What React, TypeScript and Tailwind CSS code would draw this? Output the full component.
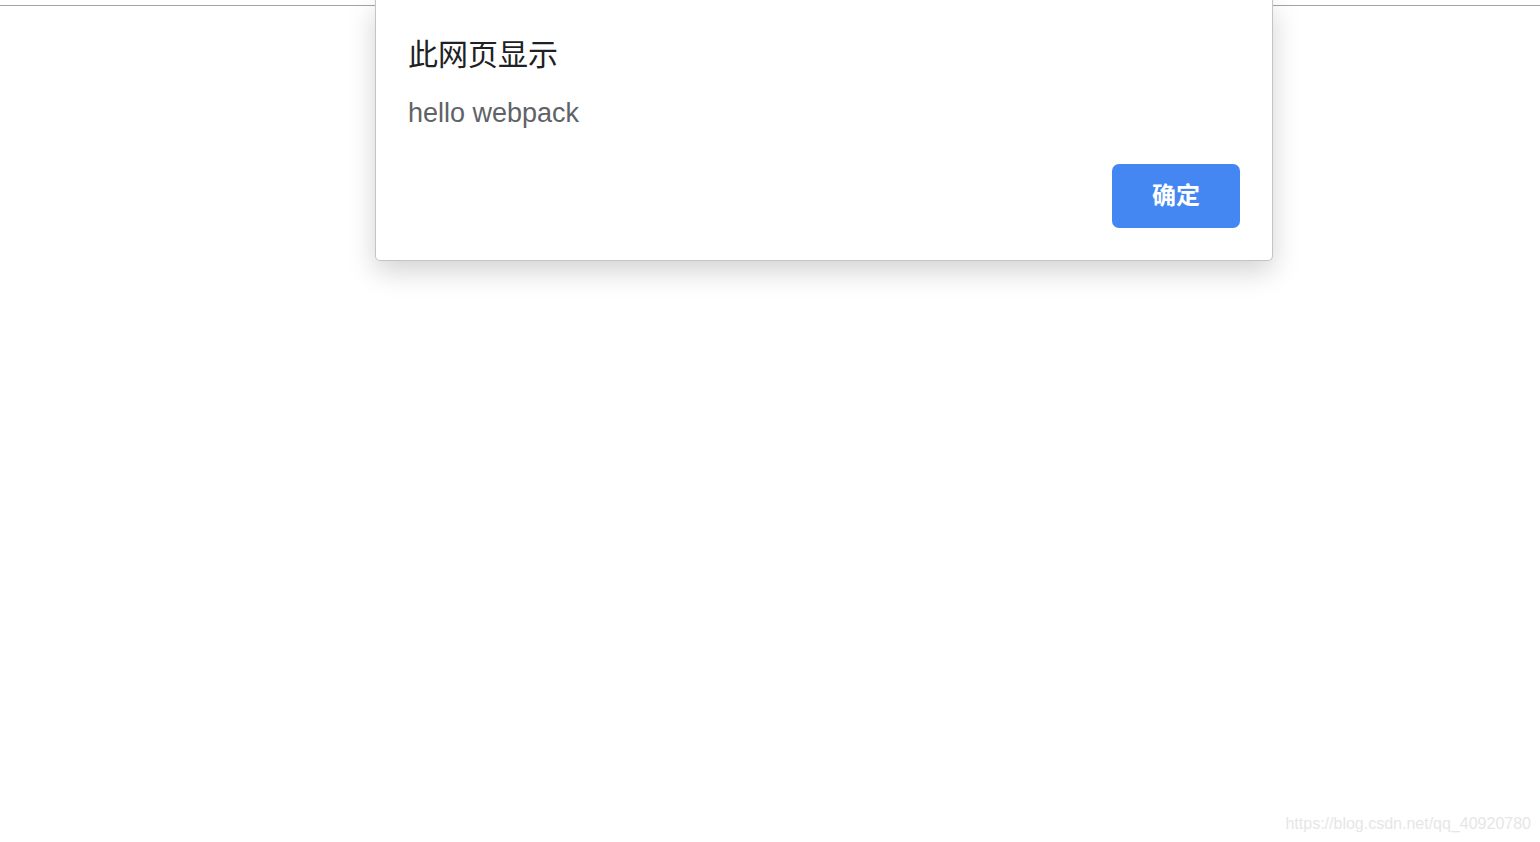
import React from "react";

export default function App() {
  return (
    <div className="relative h-[842px] w-full overflow-hidden bg-white" style={{ fontFamily: '"Liberation Sans", "Noto Sans CJK SC", sans-serif' }}>
      <div className="pt-[5px]">
        <div className="h-px w-full bg-[#a3a3a3]" />
      </div>

      <div className="absolute left-[375px] top-0 flex h-[261px] w-[898px] flex-col rounded-b-[5px] border border-t-0 border-[#c4c4c4] bg-white px-[32px] pb-[32px] pt-[38px] shadow-[0_10px_28px_rgba(0,0,0,0.18)]">
        <div className="h-[34px] text-[30px] leading-[34px] text-[#202124]">此网页显示</div>
        <div className="mt-[25px] h-[32px] text-[27px] leading-[32px] text-[#5f6368]">hello webpack</div>
        <div className="mt-auto flex justify-end">
          <button className="flex h-[64px] w-[128px] items-center justify-center rounded-[7px] bg-[#4487f2] text-[24px] font-bold text-white">
            确定
          </button>
        </div>
      </div>

      <div className="absolute bottom-[6px] right-[9px] text-[16px] text-[#e6e6e6]">
        https://blog.csdn.net/qq_40920780
      </div>
    </div>
  );
}
